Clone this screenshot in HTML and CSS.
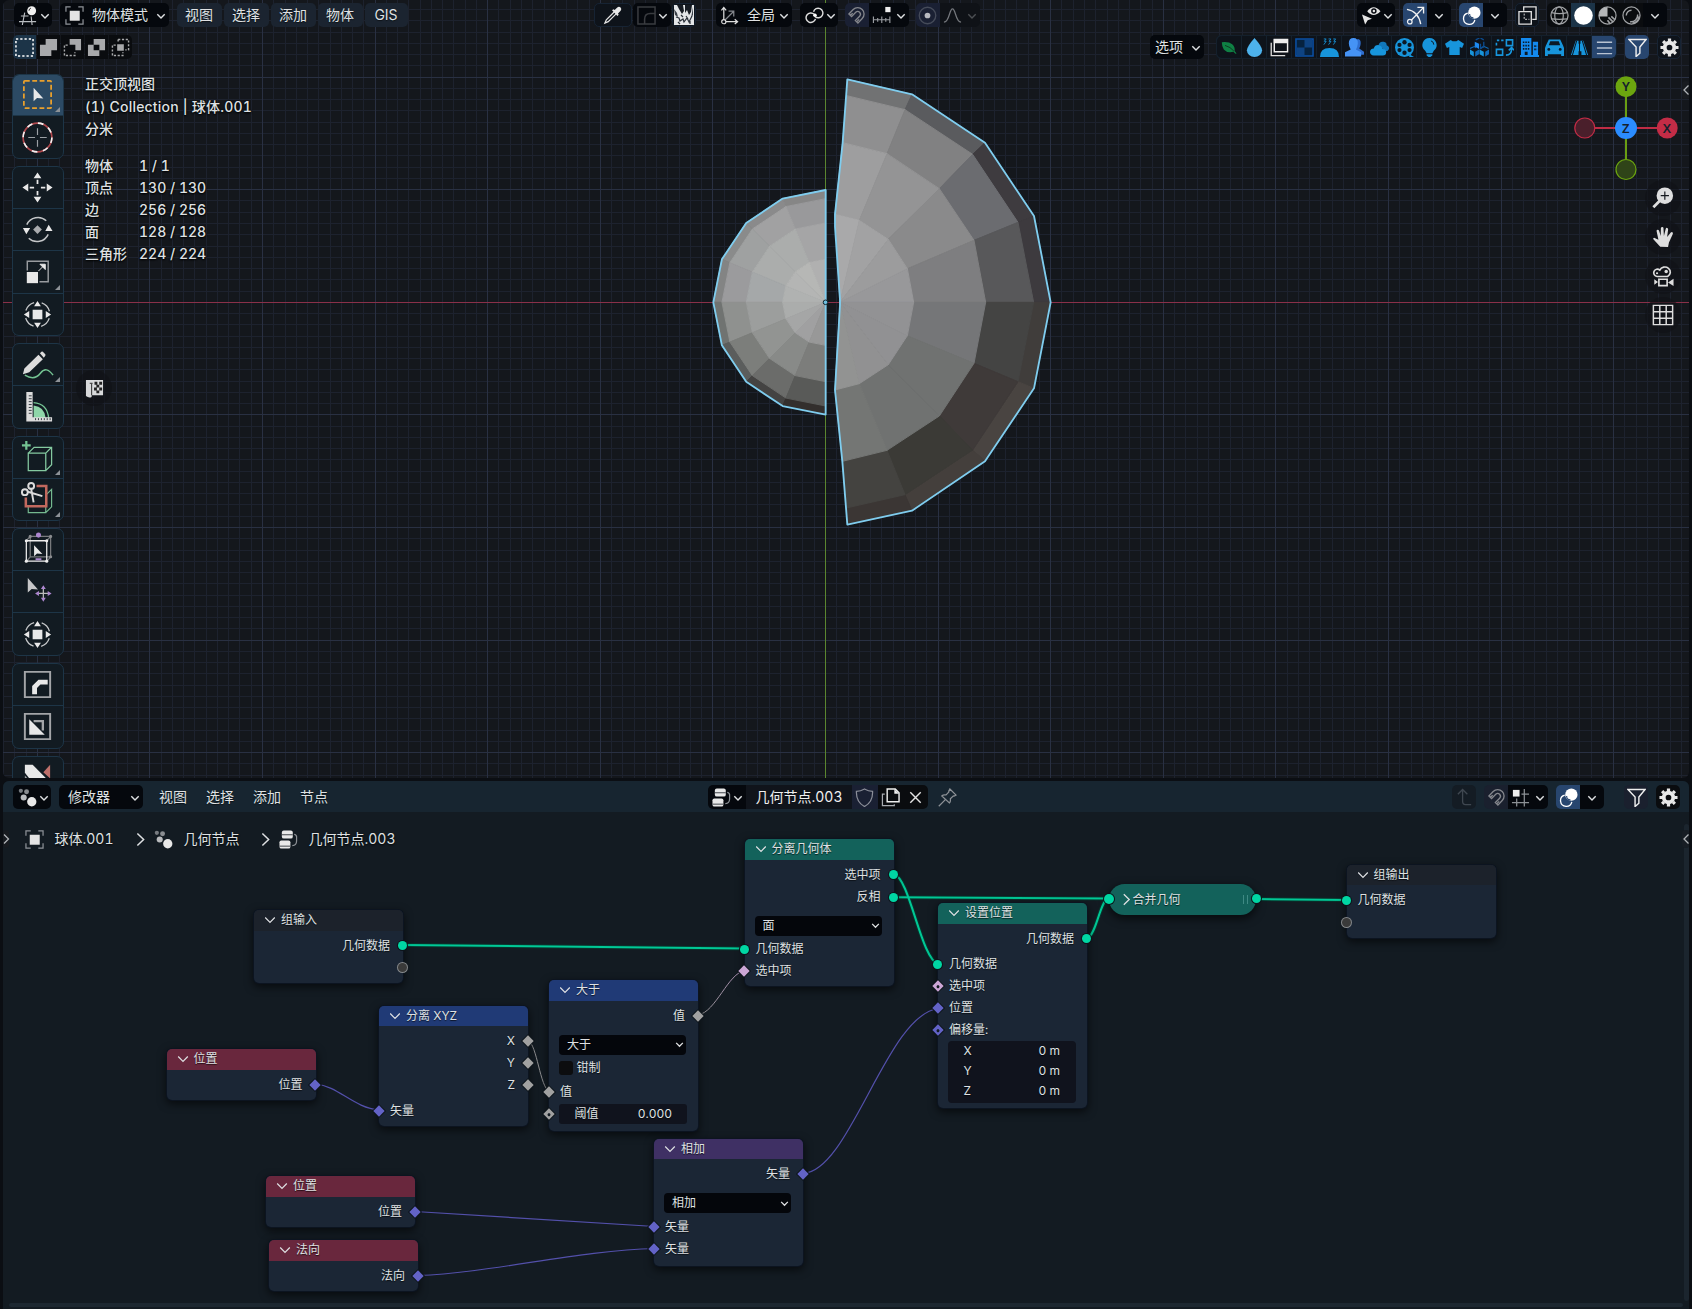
FILE: index.html
```html
<!DOCTYPE html>
<html lang="zh-CN">
<head>
<meta charset="utf-8">
<title>几何节点</title>
<link rel="stylesheet" href="styles.css">
</head>
<body>
<svg class="sprite" width="0" height="0" aria-hidden="true">
  <symbol id="chev" viewBox="0 0 10 10"><path d="M1.300 3.200 5 7 8.700 3.200" fill="none" stroke="currentColor" stroke-width="1.400"/></symbol>
  <symbol id="chevthin" viewBox="0 0 12 12"><path d="M1.200 3.500 6 8.500 10.800 3.500" fill="none" stroke="currentColor" stroke-width="1.200"/></symbol>
  <symbol id="view3d" viewBox="0 0 20 20"><path d="M2 10.500H10M0 16.500H18M6 7 3.500 20M12.800 11 13.800 20" fill="none" stroke="#b9bcc0" stroke-width="1.200"/><circle cx="13.300" cy="5" r="4.700" fill="#f0f0f0"/><path d="M10.500 5a3 3 0 0 1 2-2.800" stroke="#222" fill="none"/></symbol>
  <symbol id="object" viewBox="0 0 20 20"><rect x="5" y="5" width="10.500" height="10.500" fill="#e4e4e4"/><path d="M1 6V1H6M14 1h5V6M19 14v5H14M6 19H1V14" fill="none" stroke="#8e9298" stroke-width="1.300"/></symbol>
  <symbol id="dropper" viewBox="0 0 20 20"><path d="M12 6 3.500 14.500 2 18l3.500-1.500L14 8" fill="none" stroke="#e4e4e4" stroke-width="1.300"/><path d="m9.500 4.500 1.500-1 1.300.8L15 1.500q2-1.300 3.500.2t.1 3.400L15.800 8l.7 1.300-1.300 1.200z" fill="#e8e8e8"/></symbol>
  <symbol id="falloff" viewBox="0 0 20 20"><path d="M1 1h18v18H1zM8 19v-5q0-6 6-6h5" fill="none" stroke="#3a3c40" stroke-width="1.600"/></symbol>
  <symbol id="thumb" viewBox="0 0 22 22"><path d="M1 1h20v20H1z" fill="#e4e6e8"/><path d="M4 1h6l1 6-2 3-3-5zM12 1h7l-1 7-2 3-2-5-2 3z" fill="#161b22"/><path d="M20 3v8l-2 3zM1 5l3 4 1 4-3-2z" fill="#3a4048"/><path d="m3 13 3 1 1 3 3-2 1 3 3-4 2 4 3-6M5 18l2 2M13 12l2 3M8 11l2 2M17 17v3" stroke="#2a3038" stroke-width="1.200" fill="none"/></symbol>
  <symbol id="axes" viewBox="0 0 20 20"><path d="M4 2v14.500H18M1.500 4.500 4 1.500l2.500 3M15.500 14l3 2.500-3 2.500" fill="none" stroke="#dedede" stroke-width="1.300"/><path d="m5 15 9-9M9 5.500h5.500V11" fill="none" stroke="#85888d" stroke-width="1.300"/><circle cx="4" cy="16.500" r="2.200" fill="#060910" stroke="#dedede" stroke-width="1.200"/></symbol>
  <symbol id="pivot" viewBox="0 0 20 20"><path d="M9.700 8.800A5 5 0 1 0 11 13.500M10.600 11.200A5 5 0 1 0 9 6" fill="none" stroke="#dedede" stroke-width="1.500"/><circle cx="10.500" cy="9.700" r="1.900" fill="#fff"/></symbol>
  <symbol id="magnet" viewBox="0 0 20 20"><path d="M2 8.500 6.500 3.700a6.700 6.700 0 1 1 9.500 9.500L11.500 18l-2.700-2.700 4.500-4.600a2.900 2.900 0 0 0-4.100-4.100L4.800 11.200zM3.500 10 6 7.500M10.300 16.600l2.500-2.500" fill="none" stroke="#85878d" stroke-width="1.400"/></symbol>
  <symbol id="snapinc" viewBox="0 0 20 20"><path d="M1 14.500h18M1.500 11v7M6 12.500v4M10.300 11v7M14.500 12.500v4M18.800 11v7" stroke="#9a9da2" stroke-width="1.200" fill="none"/><rect x="14" y="1" width="5.500" height="5.500" fill="#eee"/></symbol>
  <symbol id="snapgrid" viewBox="0 0 20 20"><path d="M1 15.500h18M6 11v8.500M14 1v18.500M11 6.500h8" stroke="#8c9095" stroke-width="1.300" fill="none"/><rect x="2" y="2" width="7" height="7" fill="#eee"/></symbol>
  <symbol id="prop" viewBox="0 0 20 20"><circle cx="10" cy="10" r="8.700" fill="none" stroke="#454b59" stroke-width="1.400"/><circle cx="10" cy="10" r="3" fill="#b8bac0"/></symbol>
  <symbol id="curve" viewBox="0 0 20 20"><path d="M1 17C7 17 6.500 3 10 3s3 14 9 14" fill="none" stroke="#75787d" stroke-width="1.400"/></symbol>
  <symbol id="eye" viewBox="0 0 20 20"><path d="M5.500 5.500Q12 -2.800 19.500 5.500 12 13.500 5.500 5.500z" fill="#e4e4e4"/><circle cx="12.500" cy="5.200" r="2.900" fill="#060910"/><circle cx="12.500" cy="5.200" r="1.300" fill="#e4e4e4"/><path d="M0 9 10.500 13.500l-4.500 1.500L3.300 19.500z" fill="#e4e4e4"/></symbol>
  <symbol id="gizmo" viewBox="0 0 20 20"><path d="M5 15.500 18 2M12 1.500h6.500V8M1 3.500q12 2 14.500 15.500" fill="none" stroke="#f2f2f2" stroke-width="1.400"/><circle cx="4" cy="16.500" r="2.400" fill="#2a4a75" stroke="#f2f2f2" stroke-width="1.300"/></symbol>
  <symbol id="overlay" viewBox="0 0 20 20"><circle cx="13" cy="7" r="6.500" fill="#fff"/><path d="M6 7.500a6 6 0 1 0 7.500 7" fill="none" stroke="#fff" stroke-width="1.400"/><path d="M8 8.500a4 4 0 0 0 4 4" stroke="#2a4a75" stroke-width="1.300" fill="none"/></symbol>
  <symbol id="xray" viewBox="0 0 20 20"><path d="M1 6h13v13H1zM6 5V1h13V14H15" fill="none" stroke="#e0e0e0" stroke-width="1.400"/><path d="M6.500 8v6H12" stroke="#e0e0e0" stroke-dasharray="2 1.500" fill="none"/></symbol>
  <symbol id="wire" viewBox="0 0 20 20"><g fill="none" stroke="#a0a2a5" stroke-width="1.300"><circle cx="10" cy="10" r="9"/><ellipse cx="9.500" cy="10" rx="4.500" ry="9"/><path d="M1.500 7q8.500 2 17 0M1.500 13.500q8.500 1 17 0"/></g></symbol>
  <symbol id="solid" viewBox="0 0 20 20"><circle cx="10" cy="10" r="9.800" fill="#fff"/></symbol>
  <symbol id="matprev" viewBox="0 0 20 20"><circle cx="10" cy="10" r="9" fill="none" stroke="#a0a2a5" stroke-width="1.300"/><path d="M10 11V1A9 9 0 0 0 1 11zM18 11h-7z" fill="#b4b6b8"/><path d="m11 12 5 5M14 11l4 3.500M10 15l3 4" stroke="#a0a2a5" stroke-width="1.700"/></symbol>
  <symbol id="render" viewBox="0 0 20 20"><circle cx="10" cy="10" r="9" fill="none" stroke="#a0a2a5" stroke-width="1.300"/><path d="M4.500 10A5.500 5.500 0 0 1 10 4.500M16.500 9a7 7 0 0 1-8 7.500M18 11a8 8 0 0 1-7 7" fill="none" stroke="#a0a2a5" stroke-width="1.500"/></symbol>
  <symbol id="sel1" viewBox="0 0 20 20"><path d="M1 1h18v18H1z" fill="none" stroke="#fff" stroke-width="1.600" stroke-dasharray="2.400 2.100"/></symbol>
  <symbol id="sel2" viewBox="0 0 20 20"><path d="M7 1h12v12h-6v6H1V7h6z" fill="#a8a9ab"/></symbol>
  <symbol id="sel3" viewBox="0 0 20 20"><path d="M7 1h12v12h-6V7H7z" fill="#a8a9ab"/><path d="M5 7.500H1.500V18.500H12.500V15" fill="none" stroke="#a8a9ab" stroke-width="1.500" stroke-dasharray="2.300 1.700"/></symbol>
  <symbol id="sel4" viewBox="0 0 20 20"><path d="M7 1h12v12h-6v6H1V7h6zM7 7v6h6V7z" fill="#a8a9ab" fill-rule="evenodd"/></symbol>
  <symbol id="sel5" viewBox="0 0 20 20"><path d="M6.500 6.500h7v7h-7z" fill="#a8a9ab"/><path d="M7.500 1.500h11v11H15M7.500 1.500V5M5 7.500H1.500V18.500H12.500V15" fill="none" stroke="#a8a9ab" stroke-width="1.500" stroke-dasharray="2.300 1.700"/></symbol>
  <symbol id="leaf" viewBox="0 0 20 20"><path d="M1 4q9-1 13 2.500 4 4 3 8.500l2.500 3-1.500.5-2.500-2.500Q8 18 3.500 13 1 9 1 4z" fill="#0f8044"/><path d="M5 8q7 2 11 7" stroke="#0c2b1c" fill="none"/></symbol>
  <symbol id="drop" viewBox="0 0 20 20"><path d="M10 0q8 9 8 13a8 7 0 0 1-16 0Q2 9 10 0z" fill="#4db2ec"/></symbol>
  <symbol id="windows" viewBox="0 0 20 20"><path d="M4.500 1.500h14v13h-14z" fill="none" stroke="#eee" stroke-width="1.500"/><path d="M4 1h15v4.500H4z" fill="#eee"/><path d="M1.300 5v13.500H16" fill="none" stroke="#ddd" stroke-width="1.400"/></symbol>
  <symbol id="checker" viewBox="0 0 20 20"><path d="M1 1h18v18H1z" fill="#06223f" stroke="#0b50a5" stroke-width="1.600"/><path d="M10 2h8v8h-8zM2 10h8v8H2z" fill="#0e4382"/></symbol>
  <symbol id="steam" viewBox="0 0 20 20"><path d="M0 20q0-9.500 10-9.500T20 20z" fill="#1795dc"/><path d="M4 1h2.500L4.500 3.500h2L4 7M9 1h2.500L9.500 3.500h2L9 7M14 1h2.500L14.500 3.500h2L14 7" fill="none" stroke="#1795dc" stroke-width=".9"/></symbol>
  <symbol id="people" viewBox="0 0 20 20"><path d="M13 1q4 0 3.500 5-.3 3-1.500 5l5 3.500v3H9z" fill="#2e6ecf"/><path d="M9 0q5 0 4.500 6Q13 10 11.500 12l5.500 3v4.500H0V15l6-3Q4 9 4 5.500 4 0 9 0z" fill="#4593f5"/></symbol>
  <symbol id="cloud" viewBox="0 0 20 20"><path d="M9 7.500q1-4.500 5.500-3.500 3 .5 3 3.500 3 1 2.500 4-1 3-4 2.500z" fill="#1177ba"/><path d="M4 18.500q-4-.5-4-4Q.5 11 4 11q1-4 5.500-3.500 3 .5 3.500 4 4 0 4 3.500t-3.500 3.500z" fill="#1795dc"/></symbol>
  <symbol id="reel" viewBox="0 0 20 20"><circle cx="10" cy="10" r="10" fill="#1795dc"/><path d="m15 17 5 3h-5z" fill="#1795dc"/><g fill="#0b1824"><circle cx="10" cy="4.500" r="2.300"/><circle cx="10" cy="15.500" r="2.300"/><circle cx="4.700" cy="7.300" r="2.200"/><circle cx="15.300" cy="7.300" r="2.200"/><circle cx="4.700" cy="12.700" r="2.200"/><circle cx="15.300" cy="12.700" r="2.200"/></g></symbol>
  <symbol id="bulb" viewBox="0 0 20 20"><path d="M10 0a7.500 7.500 0 0 1 4.500 13.500L13 16H7l-1.500-2.500A7.500 7.500 0 0 1 10 0zM7 17h6v1.500l-2 1.500H9L7 18.500z" fill="#1795dc"/><path d="M11.500 3q3 .8 3 4" stroke="#0b1824" fill="none"/></symbol>
  <symbol id="shirt" viewBox="0 0 20 20"><path d="m6 2 2 1.500h4L14 2l6 4-2 4.500-2.500-1V18h-11V9.500L2 10.500 0 6z" fill="#1795dc"/></symbol>
  <symbol id="boxes" viewBox="0 0 20 20"><path d="M0 12v5l4 2.500v-5zM10 12v5l4.500 2.500v-5z" fill="#1795dc"/><path d="M5.500 14.500v5L9.500 17v-5zM16 14.500v5l4-2.500v-5z" fill="#0f6ab8"/><path d="m0 11 4.500-2 2 1.200M11 11l4-2 4.500 2" fill="none" stroke="#0f6ab8" stroke-width="1.200"/><path d="M5 4v5l4.500 2.500V6z" fill="#1e8af0"/><path d="m6 2 4-2M14.500 4v4.500L11 11V6M11 0l3.500 2" fill="none" stroke="#0c4b8e" stroke-width="1.400"/></symbol>
  <symbol id="swap" viewBox="0 0 20 20"><g fill="none" stroke="#1795dc" stroke-width="1.700"><path d="M12 2h6.500v6H12zM1.500 12H8v6H1.500z"/><path d="M1.500 8V5M2 2.500h2.500M6.500 2.500H9M11.500 18q6 0 6-7M14.500 13l3-3 2.500 3"/></g></symbol>
  <symbol id="building" viewBox="0 0 20 20"><path d="M1 0h11v18H1zM13.500 4h5.500v14h-5.500zM0 18h20v2H0z" fill="#1389ee"/><path d="M3 4.500h7M3 8h7M3 11.500h7M15 8.500h3M15 12h3" stroke="#0b1824" stroke-width="1.700" stroke-dasharray="1.600 1"/><path d="M5 14.500h3V18H5z" fill="#0b1824"/></symbol>
  <symbol id="car" viewBox="0 0 20 20"><path d="M1 8 4 1.500h12L19 8l1 2.500V19h-3v-2H3v2H0v-8.500z" fill="#1795dc"/><path d="m4 7.500 1.500-4h9l1.500 4z" fill="#0b1824"/><circle cx="4" cy="12" r="1.500" fill="#0b1824"/><circle cx="16" cy="12" r="1.500" fill="#0b1824"/></symbol>
  <symbol id="road" viewBox="0 0 20 20"><path d="M6 3h3v3h2V3h3l5 15h-7v-4H9v4H1z" fill="#1795dc"/><path d="M7 3 2.500 18M13 3l4.500 15M10 3v15" stroke="#0b1824" stroke-width="1.100"/></symbol>
  <symbol id="lines" viewBox="0 0 20 20"><path d="M2 4.500h16M2 10.500h16M2 16.500h16" stroke="#b9c3d2" stroke-width="1.400"/></symbol>
  <symbol id="filter" viewBox="0 0 20 20"><path d="M1 1.500h18L12.500 9.500V16l-4 3.500v-10z" fill="none" stroke="#eee" stroke-width="1.500"/></symbol>
  <symbol id="gear" viewBox="0 0 20 20"><circle cx="10" cy="10" r="5" fill="none" stroke="#e8e8e8" stroke-width="4"/><path d="M10 .5v3M10 16.500v3M.5 10h3M16.500 10h3M3.300 3.300l2 2M14.700 14.700l2 2M3.300 16.700l2-2M14.700 5.300l2-2" stroke="#e8e8e8" stroke-width="3.400"/></symbol>
  <symbol id="geonodes" viewBox="0 0 20 20"><circle cx="3" cy="3" r="2.200" fill="#777b80"/><circle cx="9" cy="4" r="2.600" fill="#8a8d91"/><circle cx="6" cy="10" r="3.200" fill="#b9bbbe"/><circle cx="14.500" cy="14.500" r="4.900" fill="#e8e8e8"/></symbol>
  <symbol id="nodetree" viewBox="0 0 20 20"><rect x="3" y=".5" width="11.500" height="8.500" rx="2" fill="#e8e8e8"/><rect x=".5" y="11" width="11.500" height="8.500" rx="2" fill="#e8e8e8"/><path d="M3 5h11.500M.5 17h11.500" stroke="#3a3e44"/><path d="M16 4.500q3 .5 2.500 4v3q0 4.500-4.500 5" fill="none" stroke="#8c9095" stroke-width="1.300"/></symbol>
  <symbol id="shield" viewBox="0 0 20 20"><path d="M10 1q4 2.500 8.500 2.500Q19 14.500 10 19.500 1 14.500 1.500 3.500 6 3.500 10 1z" fill="none" stroke="#8a8d98" stroke-width="1.300"/></symbol>
  <symbol id="copy" viewBox="0 0 20 20"><path d="M6.500 1h8.500L19 5v9.500H6.500z" fill="none" stroke="#eee" stroke-width="1.500"/><path d="M14 1v5h5z" fill="#eee"/><path d="M4 6.500H1.500V18.500H14V17" fill="none" stroke="#a8abb0" stroke-width="1.300"/></symbol>
  <symbol id="close" viewBox="0 0 20 20"><path d="M4.500 4.500 15.500 15.500M15.500 4.500 4.500 15.500" stroke="#e4e4e4" stroke-width="1.500"/></symbol>
  <symbol id="pin" viewBox="0 0 20 20"><path d="m12.500 1 6.500 6.500-2 1-.8-.2-3.200 3q.5 3-1 4.500L4 8.300q1.500-1.500 4.500-1l3-3.200-.2-.8zM7.500 12.500.8 19.200" fill="none" stroke="#8c9095" stroke-width="1.300"/></symbol>
  <symbol id="up" viewBox="0 0 20 20"><path d="M3 6.500 8 1.500l5 5M8 2v12q0 3.500 3 3.500h6" fill="none" stroke="#3f4750" stroke-width="1.400"/></symbol>

  <symbol id="t-select" viewBox="0 0 36 36"><rect x="4" y="4" width="28" height="28" rx="1" fill="none" stroke="#e9a02c" stroke-width="1.800" stroke-dasharray="5 2.600"/><path d="M14 11v14l3.500-3.500 6.500.5z" fill="#e8e8e8"/></symbol>
  <symbol id="t-cursor" viewBox="0 0 36 36"><circle cx="18" cy="18" r="14.800" fill="none" stroke="#b0474c" stroke-width="1.700"/><circle cx="18" cy="18" r="14.800" fill="none" stroke="#f2f2f2" stroke-width="1.700" stroke-dasharray="5.810 5.810"/><path d="M18 8.500v7M18 20.500v7M8.500 18h7M20.500 18h7" stroke="#9ba0a5" stroke-width="1.200"/></symbol>
  <symbol id="t-move" viewBox="0 0 36 36"><path d="m18 2.500 4 6h-8zM18 33.500l4-6h-8zM2.500 18l6-4v8zM33.500 18l-6-4v8z" fill="#e8e8e8"/><path d="M18 10v4.500M18 21.500v4.500M10 18h4.500M21.500 18h4.500" stroke="#e8e8e8" stroke-width="1.800"/></symbol>
  <symbol id="t-rotate" viewBox="0 0 36 36"><path d="M7 13a12.500 12.500 0 0 1 20-4M29 23a12.500 12.500 0 0 1-20 4" fill="none" stroke="#c4c6c8" stroke-width="1.500"/><path d="m3 16.500h7.500L6.500 23zM26 19.500h7.500L29.500 13z" fill="#e8e8e8"/><path d="m18 13.500 4.500 4.500-4.500 4.500-4.500-4.500z" fill="#a9abae"/></symbol>
  <symbol id="t-scale" viewBox="0 0 36 36"><path d="M7.500 17V7.500H29V28.500H20" fill="none" stroke="#989b9f" stroke-width="1.500"/><path d="M7 18.500h11.500V30H7z" fill="#e8e8e8"/><path d="m19 17.500 5-5M20.500 10.500H26V16z" fill="#e8e8e8" stroke="#e8e8e8"/></symbol>
  <symbol id="t-transform" viewBox="0 0 36 36"><circle cx="18" cy="18" r="12.700" fill="none" stroke="#c4c6c8" stroke-width="1.300" stroke-dasharray="12 7.950" stroke-dashoffset="-4"/><path d="M13 13h10v10H13z" fill="#e8e8e8"/><path d="m18 4 3.500 5.500h-7zM18 32l3.500-5.500h-7zM4 18l5.500-3.500v7zM32 18l-5.500-3.500v7z" fill="#e8e8e8"/></symbol>
  <symbol id="t-pen" viewBox="0 0 36 36"><path d="M5 29q10 6 16-2t13 2" fill="none" stroke="#74c493" stroke-width="1.500"/><path d="m3 28 1.500-6L19 8l4.500 4.500L9.500 26zM20.500 6.500 22 5q1-.5 1.500 0l2.500 2.500q.5 1 0 1.500l-1.500 2z" fill="#dcdcdc"/></symbol>
  <symbol id="t-measure" viewBox="0 0 36 36"><path d="M14 30V17q11 1 12.500 13z" fill="#8fd6a9"/><path d="M14 14q14 1 15.500 16" fill="none" stroke="#74c493" stroke-width="1.300"/><path d="M6.500 3h6.500v26h20v4.500H6.500z" fill="#dcdcdc"/><path d="M12 7h-3M12 10h-3M12 13h-3M12 16h-3M12 19h-3M12 22h-3M12 25h-3M16 30v2M19 30v2M22 30v2M25 30v2M28 30v2M31 30v2" stroke="#333a40"/></symbol>
  <symbol id="t-cube" viewBox="0 0 36 36"><path d="M8.500 13.500h18v18h-18zM8.500 13.500l6-6h18v18l-6 6M26.500 13.500l6-6" fill="none" stroke="#84c9a0" stroke-width="1.300"/><path d="M6.500 1v9M2 5.500h9" stroke="#74c493" stroke-width="2.300"/></symbol>
  <symbol id="t-cut" viewBox="0 0 36 36"><path d="M8.500 25v6.500h18v-18M26.500 13.500l6-6v18l-6 6" fill="none" stroke="#74b98f" stroke-width="1.200"/><path d="M17 4h10v21H6v-9" fill="none" stroke="#c2685e" stroke-width="2.600"/><circle cx="11.500" cy="4" r="3" fill="none" stroke="#dcdcdc" stroke-width="2"/><circle cx="5" cy="10.500" r="3" fill="none" stroke="#dcdcdc" stroke-width="2"/><path d="M11.500 7l2.500 14M8 10l15 4.500" stroke="#dcdcdc" stroke-width="2"/></symbol>
  <symbol id="t-cage" viewBox="0 0 36 36"><path d="M10.500 4.500h21v21h-21zM6.500 9l4-4.500M27.500 9l4-4.500M27.500 30.500l4-5M6.500 30.500l4-5" fill="none" stroke="#77797c" stroke-width="1.300"/><path d="M6.500 9h21v21h-21z" fill="none" stroke="#eee" stroke-width="1.300"/><circle cx="19" cy="3.200" r="2.600" fill="#ac86cf"/><path d="M16 28h6" stroke="#ac86cf" stroke-width="2"/><path d="M14.500 13.500v11.500l3-3 5.500.5z" fill="#e8e8e8"/><g fill="#eee"><circle cx="6.500" cy="9" r="1.600"/><circle cx="27.500" cy="9" r="1.600"/><circle cx="6.500" cy="30" r="1.600"/><circle cx="27.500" cy="30" r="1.600"/></g><g fill="#8a8c8f"><circle cx="10.500" cy="4.500" r="1.600"/><circle cx="31.500" cy="4.500" r="1.600"/><circle cx="31.500" cy="25.500" r="1.600"/></g></symbol>
  <symbol id="t-tweak" viewBox="0 0 36 36"><path d="M8 4v15l4-3.500 6.500.5z" fill="#c6c7c9"/><path d="M24 15v10M19 20h10" stroke="#bbb" stroke-width="1.300"/><path d="m24 11.500 2.500 4h-5zM24 28.500l2.500-4h-5zM15.500 20l4-2.500v5zM32.500 20l-4-2.500v5z" fill="#ac86cf"/></symbol>
  <symbol id="t-bevel" viewBox="0 0 36 36"><path d="M5 5h26v26H5z" fill="none" stroke="#a3a5a8" stroke-width="2"/><path d="M12.500 28v-8.500L19 13h9.500v5H21l-3.500 3.500V28z" fill="#e8e8e8"/></symbol>
  <symbol id="t-inset" viewBox="0 0 36 36"><path d="M5 5h26v26H5z" fill="none" stroke="#a3a5a8" stroke-width="2"/><path d="M9.500 10.500 25.500 26.500H9.500z" fill="#e8e8e8"/><path d="M14 12.500h9.500V22" fill="none" stroke="#a3a5a8" stroke-width="2.400"/></symbol>
  <symbol id="t-knife" viewBox="0 0 36 36"><path d="M5 5h8l18 18v12H22L5 13z" fill="#e8e8e8"/><path d="M31 5v14l-7-6.500z" fill="#bd6f6a"/><path d="m5 16 17 18H5z" fill="#9b9da0"/></symbol>
  <symbol id="n-zoom" viewBox="0 0 24 24"><circle cx="14" cy="9.500" r="9" fill="#dedede"/><path d="m8.500 15-7 7" stroke="#dedede" stroke-width="3"/><path d="M14 5v9M9.500 9.500h9" stroke="#15181d" stroke-width="1.300"/></symbol>
  <symbol id="n-hand" viewBox="0 0 24 24"><path d="M9 22.500 1.500 14.500q-.8-1.500.8-1.800L7 15 5 5.500Q5 4 6.200 4t1.600 1.500L9.500 11 9.700 2.300Q10 1 11.200 1t1.300 1.300L13 11l2-8q.5-1.200 1.600-.9t1 1.600L16.500 12 20.500 7q1-.9 1.800-.2t.4 1.900L18.500 18l-1 5z" fill="#dedede"/></symbol>
  <symbol id="n-camera" viewBox="0 0 24 24"><g fill="none" stroke="#dedede" stroke-width="1.800"><path d="M5.500 12.500a4 4 0 1 1 3-7A6 5.500 0 1 1 17 12.500z"/><path d="M7.500 15.500h9V22.500h-9z"/></g><circle cx="5.500" cy="9" r="1.200" fill="#dedede"/><circle cx="15.500" cy="7" r="1.900" fill="#dedede"/><path d="M23.500 15v8l-6-4zM2.500 15.500l4 3-4 3z" fill="#dedede"/></symbol>
  <symbol id="n-grid" viewBox="0 0 24 24"><path d="M1.500 1.500h21v21h-21zM8.500 1.500v21M15.500 1.500v21M1.500 8.500h21M1.500 15.500h21" fill="none" stroke="#dedede" stroke-width="1.600"/></symbol>
  <symbol id="panel" viewBox="0 0 20 20"><path d="M1 1h18v16H7v2q-3 1.500-6-1z" fill="#d8d9da"/><path d="M7 5v12M5 4.500h3" stroke="#222"/><path d="M10 3h3v3h-3zM15 3h3v3h-3zM12 6h3v3h-3zM9.500 9h3v3h-3zM15 9h3v3h-3zM12 12h3v3h-3z" fill="#222"/></symbol>
</svg>

<main class="app">
  <section class="viewport">
    <svg class="scene" viewBox="3 0 1686 778" width="1686" height="778">
      <g id="grid" shape-rendering="crispEdges"></g>
      <g id="meshes" transform="translate(690 60) scale(.33333)"></g>
      <circle cx="825.500" cy="302.300" r="2.300" fill="#6fbfe0" stroke="#13262e"/>
    </svg>

    <div class="bar bar-top">
      <button class="btn dark w38"><svg class="i20"><use href="#view3d"/></svg><svg class="cv"><use href="#chev"/></svg></button>
      <button class="btn dark mode"><svg class="i20"><use href="#object"/></svg><span>物体模式</span><svg class="cv"><use href="#chev"/></svg></button>
      <nav class="menus"><button>视图</button><button>选择</button><button>添加</button><button>物体</button><button>GIS</button></nav>
      <button class="btn outline dropper"><svg class="i20"><use href="#dropper"/></svg></button>
      <button class="btn dark w38 fall"><svg class="i20"><use href="#falloff"/></svg><svg class="cv"><use href="#chev"/></svg></button>
      <button class="btn outline thumb"><svg class="i22"><use href="#thumb"/></svg></button>
      <button class="btn dark orient"><svg class="i20"><use href="#axes"/></svg><span>全局</span><svg class="cv"><use href="#chev"/></svg></button>
      <button class="btn dark w38 pivot"><svg class="i20"><use href="#pivot"/></svg><svg class="cv"><use href="#chev"/></svg></button>
      <div class="join snap"><button class="btn navy w24"><svg class="i20"><use href="#magnet"/></svg></button><button class="btn dark w40"><svg class="i20"><use href="#snapinc"/></svg><svg class="cv"><use href="#chev"/></svg></button></div>
      <div class="join propo"><button class="btn navy w24"><svg class="i20"><use href="#prop"/></svg></button><button class="btn dim w40"><svg class="i20"><use href="#curve"/></svg><svg class="cv"><use href="#chev"/></svg></button></div>
      <div class="right top-right">
        <button class="btn dark w38"><svg class="i20"><use href="#eye"/></svg><svg class="cv"><use href="#chev"/></svg></button>
        <div class="join"><button class="btn blue w24"><svg class="i20"><use href="#gizmo"/></svg></button><button class="btn dark w24"><svg class="cv"><use href="#chev"/></svg></button></div>
        <div class="join"><button class="btn blue w24"><svg class="i20"><use href="#overlay"/></svg></button><button class="btn dark w24"><svg class="cv"><use href="#chev"/></svg></button></div>
        <button class="btn outline w24"><svg class="i20"><use href="#xray"/></svg></button>
        <div class="join shading"><button class="btn black w24"><svg class="i20"><use href="#wire"/></svg></button><button class="btn teal w24"><svg class="i20"><use href="#solid"/></svg></button><button class="btn black w24"><svg class="i20"><use href="#matprev"/></svg></button><button class="btn black w24"><svg class="i20"><use href="#render"/></svg></button><button class="btn dark w24"><svg class="cv"><use href="#chev"/></svg></button></div>
      </div>
    </div>

    <div class="bar bar-second">
      <div class="join selmodes"><button class="btn teal"><svg class="i20"><use href="#sel1"/></svg></button><button class="btn black"><svg class="i20"><use href="#sel2"/></svg></button><button class="btn black"><svg class="i20"><use href="#sel3"/></svg></button><button class="btn black"><svg class="i20"><use href="#sel4"/></svg></button><button class="btn black"><svg class="i20"><use href="#sel5"/></svg></button></div>
      <div class="right second-right">
        <button class="btn dark options"><span>选项</span><svg class="cv"><use href="#chev"/></svg></button>
        <div class="join assets">
          <button><svg class="i16"><use href="#leaf"/></svg></button><button><svg class="i20"><use href="#drop"/></svg></button><button><svg class="i20"><use href="#windows"/></svg></button><button><svg class="i20"><use href="#checker"/></svg></button><button><svg class="i20"><use href="#steam"/></svg></button><button><svg class="i20"><use href="#people"/></svg></button><button><svg class="i20"><use href="#cloud"/></svg></button><button><svg class="i20"><use href="#reel"/></svg></button><button><svg class="i20"><use href="#bulb"/></svg></button><button><svg class="i20"><use href="#shirt"/></svg></button><button><svg class="i20"><use href="#boxes"/></svg></button><button><svg class="i20"><use href="#swap"/></svg></button><button><svg class="i20"><use href="#building"/></svg></button><button><svg class="i20"><use href="#car"/></svg></button><button><svg class="i20"><use href="#road"/></svg></button><button class="on"><svg class="i20"><use href="#lines"/></svg></button>
        </div>
        <button class="btn blue w24"><svg class="i20"><use href="#filter"/></svg></button>
        <button class="btn outline w24"><svg class="i20"><use href="#gear"/></svg></button>
      </div>
    </div>

    <div class="stage">
      <aside class="tools">
        <div class="group"><button class="active more"><svg><use href="#t-select"/></svg></button><button><svg><use href="#t-cursor"/></svg></button></div>
        <div class="group"><button><svg><use href="#t-move"/></svg></button><button><svg><use href="#t-rotate"/></svg></button><button class="more"><svg><use href="#t-scale"/></svg></button><button><svg><use href="#t-transform"/></svg></button></div>
        <div class="group"><button class="more"><svg><use href="#t-pen"/></svg></button><button><svg><use href="#t-measure"/></svg></button></div>
        <div class="group"><button class="more"><svg><use href="#t-cube"/></svg></button><button class="more"><svg><use href="#t-cut"/></svg></button></div>
        <div class="group"><button><svg><use href="#t-cage"/></svg></button><button><svg><use href="#t-tweak"/></svg></button><button><svg><use href="#t-transform"/></svg></button></div>
        <div class="group"><button><svg><use href="#t-bevel"/></svg></button><button><svg><use href="#t-inset"/></svg></button></div>
        <div class="group"><button><svg><use href="#t-knife"/></svg></button></div>
      </aside>
      <div class="info">
        <p>正交顶视图</p>
        <p class="path">(1) Collection | 球体.001</p>
        <p>分米</p>
        <dl class="stats">
          <dt>物体</dt><dd>1 / 1</dd>
          <dt>顶点</dt><dd>130 / 130</dd>
          <dt>边</dt><dd>256 / 256</dd>
          <dt>面</dt><dd>128 / 128</dd>
          <dt>三角形</dt><dd>224 / 224</dd>
        </dl>
        <div class="round panel-btn"><svg class="i20"><use href="#panel"/></svg></div>
      </div>
      <div class="navs">
        <svg class="axis" width="110" height="110" viewBox="1571 73 110 110">
          <path d="M1626 87v82" stroke="#6a9e12" stroke-width="2"/><path d="M1585 128h82" stroke="#bf2c45" stroke-width="2"/>
          <circle cx="1626" cy="86.700" r="10.500" fill="#6ca50f"/><circle cx="1667.200" cy="128" r="10.500" fill="#c32c46"/>
          <circle cx="1626" cy="169.500" r="10" fill="#2f4418" stroke="#6ca50f" stroke-width="1.200"/><circle cx="1584.800" cy="128" r="10" fill="#4a1f2b" stroke="#c32c46" stroke-width="1.200"/>
          <circle cx="1626" cy="128" r="11" fill="#2b8cff"/>
          <g class="axis-label"><text x="1626" y="91.300">Y</text><text x="1625.700" y="132.800">Z</text><text x="1667" y="132.800">X</text></g>
        </svg>
        <div class="round"><svg class="i24"><use href="#n-zoom"/></svg></div>
        <div class="round"><svg class="i24"><use href="#n-hand"/></svg></div>
        <div class="round"><svg class="i24"><use href="#n-camera"/></svg></div>
        <div class="round"><svg class="i24"><use href="#n-grid"/></svg></div>
      </div>
    </div>
    <div class="tab tab-view"><svg width="6" height="12" viewBox="0 0 6 12"><path d="M5.500 1.500 1 6l4.500 4.500" fill="none" stroke="#b0b3b7" stroke-width="1.300"/></svg></div>
  </section>

  <section class="nodes">
    <header class="nhead">
      <button class="btn dark w38"><svg class="i20"><use href="#geonodes"/></svg><svg class="cv"><use href="#chev"/></svg></button>
      <button class="btn dark modifier"><span>修改器</span><svg class="cv"><use href="#chev"/></svg></button>
      <nav class="menus flat"><button>视图</button><button>选择</button><button>添加</button><button>节点</button></nav>
      <div class="join treename"><button class="btn dark w38"><svg class="i20"><use href="#nodetree"/></svg><svg class="cv"><use href="#chev"/></svg></button><span class="name">几何节点.003</span><button class="btn navy w26"><svg class="i20"><use href="#shield"/></svg></button><button class="btn black w25"><svg class="i20"><use href="#copy"/></svg></button><button class="btn black w25"><svg class="i20"><use href="#close"/></svg></button></div>
      <svg class="i20 pin"><use href="#pin"/></svg>
      <div class="right nhead-right">
        <button class="btn faint w24"><svg class="i20"><use href="#up"/></svg></button>
        <div class="join"><button class="btn slate w24"><svg class="i20"><use href="#magnet"/></svg></button><button class="btn dark w40"><svg class="i20"><use href="#snapgrid"/></svg><svg class="cv"><use href="#chev"/></svg></button></div>
        <div class="join"><button class="btn blue w24"><svg class="i20"><use href="#overlay"/></svg></button><button class="btn dark w24"><svg class="cv"><use href="#chev"/></svg></button></div>
        <button class="btn slate w24 nfilter"><svg class="i20"><use href="#filter"/></svg></button>
        <button class="btn black w24"><svg class="i20"><use href="#gear"/></svg></button>
      </div>
    </header>
    <div class="crumbs">
      <svg class="i20"><use href="#object"/></svg><span class="c1">球体.001</span>
      <svg class="sep"><use href="#chevthin"/></svg>
      <svg class="i20"><use href="#geonodes"/></svg><span class="c2">几何节点</span>
      <svg class="sep"><use href="#chevthin"/></svg>
      <svg class="i20"><use href="#nodetree"/></svg><span>几何节点.003</span>
    </div>
    <div class="tab tab-left"><svg width="7" height="12" viewBox="0 0 7 12"><path d="m1 1.500 4.500 4.500L1 10.500" fill="none" stroke="#b0b3b7" stroke-width="1.300"/></svg></div>
    <div class="vscroll"></div>
    <div class="tab tab-right"><svg width="6" height="12" viewBox="0 0 6 12"><path d="M5.500 1.500 1 6l4.500 4.500" fill="none" stroke="#b0b3b7" stroke-width="1.300"/></svg></div>
    <div class="hscroll"></div>

    <div class="canvas">
      <svg class="links" viewBox="0 781 1692 528" width="1692" height="528">
        <defs><linearGradient id="selGrad" x1="0" y1="1" x2="1" y2="0"><stop offset="0" stop-color="#8f8f90"/><stop offset="1" stop-color="#a98cb0"/></linearGradient></defs>
        <g class="link-shadow"><path d="M403 945 745 948.500"/><path d="M894 874.300C910 878 921 960 938.500 964"/><path d="M894 897.300 1108 898.500"/><path d="M1087 938.500C1096 936 1100 901 1108 898.500"/><path d="M1256.500 899 1347 900"/></g>
        <g class="link-geo"><path d="M403 945 745 948.500"/><path d="M894 874.300C910 878 921 960 938.500 964"/><path d="M894 897.300 1108 898.500"/><path d="M1087 938.500C1096 936 1100 901 1108 898.500"/><path d="M1256.500 899 1347 900"/></g>
        <g class="link-vec"><path d="M316 1084C338 1086 354 1108 379 1110"/><path d="M415 1211.500 655 1226.500"/><path d="M418.500 1275.500C490 1273 580 1250 655 1248.500"/><path d="M803 1173.500C850 1172 887 1014 938.500 1008.500"/></g>
        <path d="M528 1040.500C537 1044 540 1088 549.500 1091.500" fill="none" stroke="#8e8e90"/>
        <path d="M698 1015C716 1012 728 973 745 970.500" fill="none" stroke="url(#selGrad)"/>
      </svg>

      <article class="node n-in"><h3><svg><use href="#chevthin"/></svg>组输入</h3><div class="row out"><i class="s geo"></i>几何数据</div><div class="row out"><i class="s empty"></i></div></article>
      <article class="node red n-pos1"><h3><svg><use href="#chevthin"/></svg>位置</h3><div class="row out"><i class="s dia vec"></i>位置</div></article>
      <article class="node blue n-xyz"><h3><svg><use href="#chevthin"/></svg>分离 XYZ</h3><div class="row out"><i class="s dia val"></i>X</div><div class="row out"><i class="s dia val"></i>Y</div><div class="row out"><i class="s dia val"></i>Z</div><div class="row in spaced"><i class="s dia vec"></i>矢量</div></article>
      <article class="node blue n-gt"><h3><svg><use href="#chevthin"/></svg>大于</h3><div class="row out"><i class="s dia val"></i>值</div><div class="select">大于<svg><use href="#chev"/></svg></div><div class="check"><b></b>钳制</div><div class="row in"><i class="s dia val"></i>值</div><div class="row in field-row"><i class="s dia val hole"></i><div class="field"><span>阈值</span><span>0.000</span></div></div></article>
      <article class="node red n-pos2"><h3><svg><use href="#chevthin"/></svg>位置</h3><div class="row out"><i class="s dia vec"></i>位置</div></article>
      <article class="node red n-nor"><h3><svg><use href="#chevthin"/></svg>法向</h3><div class="row out"><i class="s dia vec"></i>法向</div></article>
      <article class="node purple n-add"><h3><svg><use href="#chevthin"/></svg>相加</h3><div class="row out"><i class="s dia vec"></i>矢量</div><div class="select">相加<svg><use href="#chev"/></svg></div><div class="row in"><i class="s dia vec"></i>矢量</div><div class="row in"><i class="s dia vec"></i>矢量</div></article>
      <article class="node green n-sep"><h3><svg><use href="#chevthin"/></svg>分离几何体</h3><div class="row out"><i class="s geo"></i>选中项</div><div class="row out second"><i class="s geo"></i>反相</div><div class="select">面<svg><use href="#chev"/></svg></div><div class="row in"><i class="s geo"></i>几何数据</div><div class="row in"><i class="s dia bool"></i>选中项</div></article>
      <article class="node green n-set"><h3><svg><use href="#chevthin"/></svg>设置位置</h3><div class="row out"><i class="s geo"></i>几何数据</div><div class="row in spaced"><i class="s geo"></i>几何数据</div><div class="row in"><i class="s dia bool hole"></i>选中项</div><div class="row in"><i class="s dia vec"></i>位置</div><div class="row in"><i class="s dia vec hole"></i>偏移量:</div><div class="vector"><div><span>X</span><span>0 m</span></div><div><span>Y</span><span>0 m</span></div><div><span>Z</span><span>0 m</span></div></div></article>
      <article class="pill n-join"><i class="s geo left"></i><svg><use href="#chevthin"/></svg><span>合并几何</span><em></em><i class="s geo rightside"></i></article>
      <article class="node n-out"><h3><svg><use href="#chevthin"/></svg>组输出</h3><div class="row in"><i class="s geo"></i>几何数据</div><div class="row in second"><i class="s empty"></i></div></article>
    </div>
  </section>
</main>
<script src="script.js"></script>
</body>
</html>
```
FILE: styles.css
```css
* { box-sizing: border-box; }
body {
  margin: 0; width: 1692px; height: 1309px; overflow: hidden; background: #0b0e13; color: #dfe1e3;
  font: 14px/20px Inter, "Noto Sans CJK SC", sans-serif; font-variant-numeric: tabular-nums;
}
button { border: 0; padding: 0; margin: 0; background: none; color: inherit; font: inherit; }
p, dl, dd, h3 { margin: 0; }
svg { display: block; flex: none; }
.sprite { position: absolute; }
.app { display: flex; flex-direction: column; gap: 3px; padding: 0 3px; height: 1309px; }

/* 3D viewport */
.viewport { position: relative; height: 778px; overflow: hidden; background: #14171c; border-radius: 6px; display: flex; flex-direction: column; }
.scene { position: absolute; inset: 0; }
.bar { position: relative; display: flex; align-items: center; height: 24px; padding-left: 11px; }
.bar-top { margin-top: 3px; }
.bar-second { margin-top: 8px; padding-left: 10px; }
.right { margin-left: auto; display: flex; align-items: center; }
.top-right { gap: 8px; padding-right: 22px; }
.second-right { gap: 8px; padding-right: 8px; }
.second-right .options { margin-right: 4px; }

.i16 { width: 16px; height: 16px; }
.i20 { width: 19px; height: 19px; }
.i22 { width: 22px; height: 22px; }
.i24 { width: 22px; height: 22px; }
.cv { width: 10px; height: 10px; margin-top: 1px; }

.btn { height: 24px; border-radius: 5px; display: flex; align-items: center; justify-content: center; flex: none; text-shadow: 0 1px 1px #000; }
.dark { background: #05080d; }
.black { background: #0a0c0f; }
.navy { background: #1a2033; }
.slate { background: #1a202e; }
.blue.btn, .assets .on { background: #28466f; }
.teal { background: #1c3448; }
.dim { background: #0f1217; color: #4c4f53; }
.faint { background: #141c24; }
.outline { background: #0e131a; border: 1px solid #162333; }
.w24 { width: 24px; }
.w25 { width: 25px; }
.w26 { width: 26px; }
.w38 { width: 38px; gap: 2px; padding-left: 2px; }
.w40 { width: 40px; gap: 5px; }
.mode { width: 109px; margin-left: 8px; padding: 0 3px 0 5px; justify-content: flex-start; }
.mode span { margin: 0 8px 0 8px; }
.menus { display: flex; gap: 2px; margin-left: 7.500px; }
.menus button { width: 45px; height: 24px; border-radius: 5px; background: #1b2430; text-shadow: 0 1px 1px #0008; }
.menus button:last-child { width: 43px; }
.menus.flat { margin-left: 7.500px; }
.menus.flat button, .menus.flat button:last-child { background: none; width: 45px; }
.dropper { width: 38px; margin-left: 186px; }
.fall { margin-left: 1px; }
.thumb { width: 24px; margin-left: 1px; }
.orient { width: 76px; margin-left: 20px; padding-left: 2px; }
.orient span { margin: 0 4px 0 8px; }
.pivot { margin-left: 8px; padding-left: 3px; }
.snap { margin-left: 7px; }
.propo { margin-left: 7px; }
.options { width: 54px; gap: 8px; padding-left: 2px; }
.join { display: flex; }
.join .btn { border-radius: 0; }
.join > :first-child { border-radius: 5px 0 0 5px; }
.join > :last-child { border-radius: 0 5px 5px 0; }
.selmodes { gap: 1px; }
.selmodes .btn { width: 23px; }
.assets { border: 1px solid #14202c; border-radius: 5px; background: #14202c; gap: 1px; overflow: hidden; }
.assets button { width: 24px; height: 22px; background: #0e131a; display: flex; align-items: center; justify-content: center; }

.stage { position: relative; display: flex; flex: 1; min-height: 0; padding: 14.500px 0 0 9px; }
.tools { display: flex; flex-direction: column; gap: 7px; width: 52px; }
.group { flex: none; border: 1px solid #1d3547; border-radius: 7px; background: #121b22; overflow: hidden; }
.group button { position: relative; display: flex; align-items: center; justify-content: center; width: 100%; height: 42.600px; padding-right: 1px; border-bottom: 1px solid #1d3547; }
.group button:first-child { height: 41.700px; }
.group button:last-child { height: 41.700px; border-bottom: 0; }
.group .active { background: #2c4a64; }
.group svg { width: 35px; height: 35px; }
.more::after { content: ""; position: absolute; right: 3px; bottom: 3px; border-left: 5px solid transparent; border-bottom: 5px solid #8d9297; }
.info { margin: -.5px 0 0 21px; font-size: 14px; font-weight: 500; text-shadow: 0 1px 2px #000, 0 0 2px #000; }
.info p { height: 22.700px; line-height: 22px; }
.info .path { letter-spacing: .2px; }
.stats { display: grid; grid-template-columns: 54px auto; grid-auto-rows: 22px; line-height: 22px; margin-top: 14px; }
.round { width: 36px; height: 36px; border-radius: 50%; background: #101216aa; display: flex; align-items: center; justify-content: center; }
.panel-btn { margin: 105px 0 0 -9px; }
.navs { margin: -.5px 0 0 auto; display: flex; flex-direction: column; align-items: flex-end; gap: 3px; padding-right: 8.500px; }
.axis { margin: 0 -.5px -6px 0; }
.axis-label { font: 600 13px "Noto Sans", sans-serif; text-anchor: middle; fill: #14202c; }
.tab { position: absolute; display: flex; align-items: center; justify-content: center; height: 18px; background: #181b20; border-radius: 4px; }
.tab-view { right: -1px; top: 81px; width: 8px; }

/* node editor */
.nodes { position: relative; flex: 1; background: #131b22; border-radius: 6px 6px 0 0; overflow: hidden; display: flex; flex-direction: column; }
.nhead { display: flex; align-items: center; height: 31px; flex: none; padding: 1px 0 0 10px; background: #172530; }
.modifier { width: 84px; margin-left: 8px; justify-content: space-between; padding: 0 3px 0 9px; }
.treename { margin-left: 371px; }
.name { width: 106px; height: 24px; line-height: 23px; background: #10141b; padding-left: 10px; color: #f0f0f0; }
.pin { margin-left: 10px; }
.nhead-right { gap: 8px; padding-right: 9px; }
.nfilter { margin-left: 12px; }
.crumbs { display: flex; align-items: center; height: 54px; padding-left: 22px; text-shadow: 0 1px 2px #000; }
.crumbs span { margin-left: 10.500px; }
.crumbs .c1 { width: 78px; }
.crumbs .c2 { width: 74px; }
.crumbs .sep { width: 15px; height: 15px; transform: rotate(-90deg); margin-right: 6.500px; }
.tab-left { left: 0; top: 49px; width: 6px; }
.tab-right { right: -1px; top: 49px; width: 8px; background: #171d24; }
.vscroll { position: absolute; right: 0; top: 43px; width: 5px; bottom: 8px; background: #1b252e; border-radius: 3px; }
.hscroll { position: absolute; left: 6px; right: 6px; bottom: 2px; height: 4px; background: #1d2831; border-radius: 2px; }
.canvas { position: absolute; left: -3px; top: 0; width: 1692px; height: 528px; font-size: 12px; line-height: 22px; text-shadow: 0 1px 1px #000a; }
.links { position: absolute; inset: 0; }
.links g { fill: none; }
.link-shadow { stroke: #08352d; stroke-width: 4; }
.link-geo { stroke: #00c896; stroke-width: 2; }
.link-vec { stroke: #5350ab; stroke-width: 1.200; }

.node { position: absolute; width: 149px; background: #1b2635; border-radius: 5px; box-shadow: 0 0 0 1px #0c1420, 0 3px 8px 1px #0009; padding-bottom: 5px; }
.node h3 { display: flex; align-items: center; height: 20.500px; margin-bottom: 4px; padding-left: 10px; gap: 5px; border-radius: 5px 5px 0 0; background: #1c222b; font-size: 12px; font-weight: 400; }
.node h3 svg { width: 12px; height: 12px; }
.red h3 { background: #69273d; }
.node.blue h3 { background: #203a76; }
.purple h3 { background: #3f3064; }
.green h3 { background: #13625b; }
.row { position: relative; height: 22px; padding: 0 13px 0 11px; }
.second { top: .7px; }
.out { text-align: right; }
.spaced { margin-top: 3.500px; }
.s { position: absolute; top: 6.500px; width: 9px; height: 9px; border-radius: 50%; box-shadow: 0 0 0 1px #0d141b; background: #00d6a3; }
.out .s { right: -4px; }
.in .s { left: -5px; }
.empty { background: #3a3a3a; box-shadow: 0 0 0 1px #84878a; }
.dia { border-radius: 0; width: 8px; height: 8px; top: 7px; transform: rotate(45deg); }
.out .dia { right: -3.500px; }
.in .dia { left: -4.500px; }
.vec { background: #6363c7; }
.val { background: #a1a1a1; }
.bool { background: #cca6d6; }
.hole::after { content: ""; position: absolute; left: 2.500px; top: 2.500px; width: 3px; height: 3px; border-radius: 50%; background: #131b22; }
.select { display: flex; align-items: center; justify-content: space-between; height: 20px; margin: 8px 12px 2.500px 10px; padding: 0 2px 0 8px; background: #04060b; border-radius: 4px; }
.select svg { width: 9px; height: 9px; }
.check { display: flex; align-items: center; gap: 4px; height: 22px; padding-left: 9.500px; margin-bottom: 2px; }
.check b { width: 14px; height: 14px; background: #0c0d0f; border-radius: 3px; }
.field-row { padding: 1px 11px 0 9.500px; }
.field { display: flex; justify-content: space-between; height: 20px; line-height: 20px; background: #10131d; border-radius: 3px; padding: 0 15px 0 16px; }
.vector { margin: -.5px 11px 0 9.500px; background: #10131d; border-radius: 4px; padding: 0 0 2px; }
.vector div { display: flex; justify-content: space-between; padding: 0 16px; height: 20px; line-height: 20px; }

.n-in { left: 254px; top: 129px; height: 73px; }
.n-pos1 { left: 166.500px; top: 268px; height: 51px; }
.n-xyz { left: 379px; top: 224.500px; height: 120.500px; }
.n-gt { left: 549px; top: 199px; height: 151px; }
.n-pos2 { left: 266px; top: 395px; height: 51px; }
.n-nor { left: 269px; top: 459px; height: 51px; }
.n-add { left: 654px; top: 357.500px; height: 127px; }
.n-sep { left: 744.500px; top: 58px; height: 147px; }
.n-set { left: 938px; top: 122px; height: 204.500px; }
.n-out { left: 1346.500px; top: 83.500px; height: 73.500px; }
.pill { position: absolute; left: 1108.500px; top: 103px; width: 147px; height: 31px; border-radius: 16px; background: #13625b; box-shadow: 0 3px 8px 1px #0009; display: flex; align-items: center; padding: 0 8px 0 11px; }
.pill > svg { width: 13px; height: 13px; transform: rotate(-90deg); }
.pill em { margin-left: auto; width: 5px; height: 9px; border: solid #3f8a84; border-width: 0 1px; }
.pill .left { left: -5px; top: 10px; width: 10px; height: 10px; }
.pill .rightside { right: -5px; top: 10px; }
```
FILE: script.js
```js
const NS = "http://www.w3.org/2000/svg";
const add = (parent, name, attrs) => {
  const el = document.createElementNS(NS, name);
  for (const key in attrs) el.setAttribute(key, attrs[key]);
  parent.appendChild(el);
};

// Floor grid: ten minor cells to each major cell, centred on the world origin.
const grid = document.getElementById("grid");
const ox = 825.5, oy = 302.3, step = 11.26;
const minor = [], major = [];
for (let i = -75; i <= 80; i++) {
  const x = Math.floor(ox + i * step);
  (i % 10 ? minor : major).push(`M${x + 0.5} 0V778`);
}
for (let i = -28; i <= 43; i++) {
  const y = Math.floor(oy + i * step);
  (i % 10 ? minor : major).push(`M0 ${y + 0.5}H1692`);
}
add(grid, "path", { d: minor.join(""), stroke: "#1d222e" });
add(grid, "path", { d: major.join(""), stroke: "#293042" });
add(grid, "path", { d: "M0 302.5H1692", stroke: "#8a3049" });
add(grid, "path", { d: "M825.5 0V778", stroke: "#5b862f" });

// Each mesh is four rings of vertices closed by a fan at the pole.
const meshes = document.getElementById("meshes");
function drawMesh(rings, pole, colours, outline) {
  rings.forEach((ring, r) => {
    for (let i = 0; i < 8; i++) {
      const inner = rings[r + 1];
      const pts = inner ? [ring[i], ring[i + 1], inner[i + 1], inner[i]] : [ring[i], ring[i + 1], pole];
      const fill = "#" + colours[r][i];
      add(meshes, "polygon", { points: pts.join(" "), fill, stroke: fill, "stroke-width": 3, "stroke-linejoin": "round" });
    }
  });
  add(meshes, "polygon", { points: outline.join(" "), fill: "none", stroke: "#7fcdef", "stroke-width": 5.5, "stroke-linejoin": "round" });
}

const arc = (radius) => Array.from({ length: 9 }, (_, i) => {
  const a = i * Math.PI / 8;
  return [407 - radius * Math.sin(a), 727 - radius * Math.cos(a)];
});
const small = [337, 311, 238, 129].map(arc);
drawMesh(small, [407, 727], [
  ["868686", "8a8a8b", "8a8b8b", "838484", "707371", "5b5d5c", "444342", "332f2d"],
  ["99999b", "a1a1a2", "9fa1a1", "9b9b9d", "8f918f", "7c7e7b", "6b6c6a", "595a58"],
  ["a5a5a6", "abadac", "abadac", "a5a8a9", "9c9e9d", "929492", "888a88", "7c7d7b"],
  ["b0b0b0", "b6b7b5", "b4b5b4", "b0b2b1", "abadac", "a5a6a6", "a0a0a1", "989898"]
], small[0]);

const outer = [[472, 58], [666, 103], [885, 248], [1032, 468], [1082, 727], [1032, 985], [885, 1204], [666, 1352], [472, 1394]];
drawMesh([
  outer,
  [[470, 107], [645, 149], [848, 283], [984, 487], [1031, 727], [984, 965], [848, 1170], [645, 1304], [469, 1344]],
  [[458, 248], [591, 281], [748, 386], [852, 541], [887, 727], [852, 910], [748, 1068], [591, 1171], [457, 1204]],
  [[435, 463], [508, 481], [595, 538], [652, 626], [671, 727], [652, 827], [595, 914], [508, 971], [435, 990]]
], [450, 727], [
  ["717273", "5a5b5e", "3e3b3f", "3d3a3e", "403d3b", "494441", "443f3c", "3b3634"],
  ["8f8f90", "818182", "6b6c70", "58585a", "444443", "3f3a39", "3b3a36", "444340"],
  ["9e9e9f", "949495", "8a8a8b", "7e7e80", "757678", "707271", "707271", "747674"],
  ["a9a9aa", "a2a2a3", "9c9c9d", "98989a", "929294", "919193", "919192", "929392"]
], [...outer, [457, 1204], [435, 990], [450, 735], [450, 720], [435, 500], [435, 463], [458, 248]]);
```
